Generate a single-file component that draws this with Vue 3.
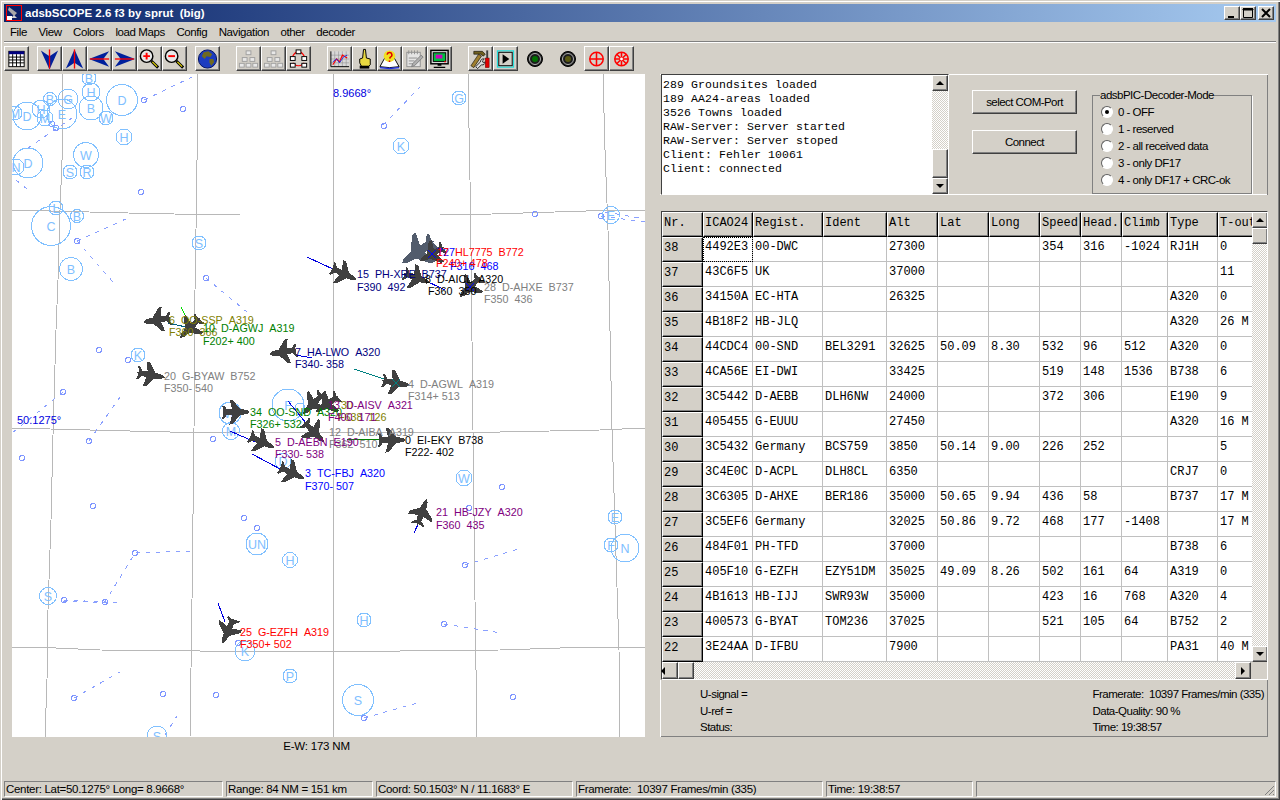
<template>
  <div class="window">
    <div class="title">
      <svg class="appicon" width="16" height="16" viewBox="0 0 16 16">
        <rect width="16" height="16" fill="#0a1f66" />
        <path d="M3 2l8 6-3 3-6-6z" fill="#a8a8a8" />
        <path d="M8 10l3 3H5z" fill="#d0d0d0" />
        <rect x="1" y="11" width="5" height="5" fill="#fff" />
        <rect x="0.5" y="0.5" width="15" height="15" fill="none" stroke="#f00" />
      </svg>
      <span class="caption">{{ caption }}</span>
      <div class="winbtns">
        <button class="winbtn"><svg width="14" height="12"><rect x="3" y="9" width="6" height="2" fill="#000" /></svg></button>
        <button class="winbtn"><svg width="14" height="12"><path d="M2.5 2.5h9v8h-9z M2 2h10v1H2z" fill="none" stroke="#000" /><rect x="2" y="1" width="10" height="2" fill="#000" /></svg></button>
        <button class="winbtn close"><svg width="14" height="12"><path d="M3 2l8 8M11 2l-8 8" stroke="#000" stroke-width="2" /></svg></button>
      </div>
    </div>

    <div class="menu">
      <span v-for="m in menu" :key="m">{{ m }}</span>
    </div>
    <div class="rule"></div>

    <div class="toolbar">
      <div class="tgroup">
        <button class="tool"><svg viewBox="0 0 24 24"><rect x="4" y="4" width="16" height="16" fill="#fff" stroke="#000" /><rect x="4" y="4" width="16" height="3" fill="#000080" /><path d="M4 10h16M4 13h16M4 16h16M8 7v13M12 7v13M16 7v13" stroke="#000" /></svg></button>
      </div>
      <div class="tgroup g8">
        <button class="tool"><svg viewBox="0 0 24 24"><path d="M3 3l9 6 9-6-9 20z" fill="#00209c" /><path d="M12 2v20" stroke="#f00" stroke-width="1.4" /></svg></button>
        <button class="tool"><svg viewBox="0 0 24 24"><path d="M3 22l9-6 9 6L12 2z" fill="#00209c" /><path d="M12 2v20" stroke="#f00" stroke-width="1.4" /></svg></button>
        <button class="tool"><svg viewBox="0 0 24 24"><path d="M22 4l-6 8 6 8L1 12z" fill="#00209c" /><path d="M2 12h20" stroke="#f00" stroke-width="1.4" /></svg></button>
        <button class="tool"><svg viewBox="0 0 24 24"><path d="M2 4l6 8-6 8 21-8z" fill="#00209c" /><path d="M2 12h20" stroke="#f00" stroke-width="1.4" /></svg></button>
        <button class="tool"><svg viewBox="0 0 24 24"><path d="M14 14l7 7" stroke="#000" stroke-width="3" /><path d="M15 15l5 5" stroke="#e8d800" stroke-width="1.2" /><circle cx="9" cy="9" r="6.5" fill="#e8e8e8" stroke="#000" stroke-width="1.5" /><path d="M5.5 9h7M9 5.5v7" stroke="#f00" stroke-width="2" /></svg></button>
        <button class="tool"><svg viewBox="0 0 24 24"><path d="M14 14l7 7" stroke="#000" stroke-width="3" /><path d="M15 15l5 5" stroke="#e8d800" stroke-width="1.2" /><circle cx="9" cy="9" r="6.5" fill="#e8e8e8" stroke="#000" stroke-width="1.5" /><path d="M5.5 9h7" stroke="#f00" stroke-width="2" /></svg></button>
      </div>
      <div class="tgroup g8">
        <button class="tool"><svg viewBox="0 0 24 24"><circle cx="12" cy="12" r="9.5" fill="#1c3cc0" stroke="#001060" /><path d="M8 5l5-1 4 3-2 3-4-1-2 3-3-3zM14 12l4 0 1 3-3 4-2-3z" fill="#706a20" /></svg></button>
      </div>
      <div class="tgroup g16">
        <button class="tool"><svg viewBox="0 0 24 24"><g fill="#e8e8e8" stroke="#a0a0a0"><rect x="9.5" y="3.5" width="5" height="4" /><rect x="5.5" y="10.5" width="5" height="4" /><rect x="13.5" y="10.5" width="5" height="4" /><rect x="2.5" y="16.5" width="5" height="4" /><rect x="9.5" y="16.5" width="5" height="4" /><rect x="16.5" y="16.5" width="5" height="4" /></g></svg></button>
        <button class="tool"><svg viewBox="0 0 24 24"><g fill="#e8e8e8" stroke="#a0a0a0"><rect x="9.5" y="3.5" width="5" height="4" /><rect x="5.5" y="10.5" width="5" height="4" /><rect x="13.5" y="10.5" width="5" height="4" /><rect x="2.5" y="16.5" width="5" height="4" /><rect x="9.5" y="16.5" width="5" height="4" /><rect x="16.5" y="16.5" width="5" height="4" /></g></svg></button>
        <button class="tool"><svg viewBox="0 0 24 24"><path d="M6 9Q12 -1 18 9M6 16Q12 22 18 16" fill="none" stroke="#f00" stroke-width="1.2" /><g fill="#fff" stroke="#000"><rect x="9.5" y="2.5" width="5" height="4" /><rect x="3.5" y="9.5" width="5" height="4" /><rect x="15.5" y="9.5" width="5" height="4" /><rect x="3.5" y="16.5" width="5" height="4" /><rect x="15.5" y="16.5" width="5" height="4" /></g></svg></button>
      </div>
      <div class="tgroup g16">
        <button class="tool"><svg viewBox="0 0 24 24"><rect x="3" y="4" width="19" height="16" fill="#d8d8d8" /><path d="M3 8h19M3 12h19M3 16h19M7 4v16M11 4v16M15 4v16M19 4v16" stroke="#909090" stroke-width=".6" /><path d="M3 4v16h19" fill="none" stroke="#000" /><path d="M5 18l4-6 3 3 3-7 5 3" fill="none" stroke="#f00" stroke-width="1.2" /><path d="M5 15l4-3 3 4 4-6 4-2" fill="none" stroke="#2030e0" /></svg></button>
        <button class="tool"><svg viewBox="0 0 24 24"><path d="M11 2h2l1 9 4 1v6l-2 2H9l-2-4v-4l3-1z" fill="#e8d840" stroke="#000" /><rect x="7" y="19" width="10" height="3" fill="#000" /></svg></button>
        <button class="tool"><svg viewBox="0 0 24 24"><path d="M2 20l5-9h10l5 9-10 1z" fill="#fff" stroke="#000" /><path d="M2 21l10 1 10-1" fill="none" stroke="#2030e0" stroke-width="1.5" /><circle cx="12" cy="9" r="6" fill="#f0e020" /><path d="M9.5 7.5a2.5 2.5 0 1 1 3.5 2.5l-1 1.5M12 13.5v1.5" fill="none" stroke="#e00000" stroke-width="1.6" /></svg></button>
        <button class="tool"><svg viewBox="0 0 24 24"><rect x="4" y="5" width="14" height="15" fill="#e4e4e4" stroke="#909090" /><path d="M6 3v4M9 3v4M12 3v4M15 3v4M6 11h9M6 14h6M6 17h6" stroke="#909090" /><path d="M10 17l9-9 2 2-9 9-3 1z" fill="#b0b0b0" stroke="#808080" /></svg></button>
        <button class="tool"><svg viewBox="0 0 24 24"><rect x="3" y="3" width="18" height="14" fill="#d8d8d8" stroke="#000" stroke-width="1.5" /><rect x="5.5" y="5.5" width="13" height="9" fill="#00c040" stroke="#000" /><rect x="8" y="7.5" width="7" height="4" fill="#d000c0" /><path d="M10 17h4v2h-4zM6 20h12v1.5H6z" fill="#000" /><rect x="17" y="14" width="1.5" height="1.5" fill="#f00" /></svg></button>
      </div>
      <div class="tgroup g16">
        <button class="tool"><svg viewBox="0 0 24 24"><path d="M5 4h9l3 3-2 2-3-2-7 0z" fill="#706020" stroke="#000" stroke-width=".6" /><path d="M10 7l3 2-8 12-3-2z" fill="#a08030" stroke="#000" stroke-width=".6" /><path d="M12 15a3 3 0 0 1 4-3l-2 2 1 2 2-1a3 3 0 0 1-4 3l-4 4-2-2z" fill="#e0e0e0" stroke="#000" stroke-width=".8" /><rect x="18" y="3" width="2" height="8" fill="#404040" /><rect x="17" y="11" width="4" height="10" fill="#e00000" stroke="#600000" stroke-width=".5" /></svg></button>
        <button class="tool"><svg viewBox="0 0 24 24"><rect x="3.5" y="3.5" width="17" height="17" fill="#d4d0c8" stroke="#00e0e0" /><rect x="5" y="5" width="14" height="14" fill="none" stroke="#000" /><path d="M9 7l7 5-7 5z" fill="#000" /></svg></button>
        <div class="led"><svg width="24" height="24" viewBox="0 0 24 24"><circle cx="12" cy="12" r="7.5" fill="#1c1c1c" stroke="#000" stroke-width="1" /><circle cx="12" cy="12" r="5.5" fill="none" stroke="#b0b0b0" /><circle cx="12" cy="12" r="3" fill="#007000" /></svg></div>
        <div class="led"><svg width="24" height="24" viewBox="0 0 24 24"><circle cx="12" cy="12" r="7.5" fill="#1c1c1c" stroke="#000" stroke-width="1" /><circle cx="12" cy="12" r="5.5" fill="none" stroke="#b0b0b0" /><circle cx="12" cy="12" r="3" fill="#585810" /></svg></div>
        <button class="tool"><svg viewBox="0 0 24 24"><circle cx="12" cy="12" r="7" fill="none" stroke="#f00" stroke-width="1.6" /><path d="M12 5v14M5 12h14" stroke="#f00" stroke-width="1.6" /></svg></button>
        <button class="tool"><svg viewBox="0 0 24 24"><circle cx="12" cy="12" r="7" fill="none" stroke="#f00" stroke-width="1.6" /><path d="M12 5v14M5 12h14M7 7l10 10M17 7L7 17" stroke="#f00" stroke-width="1.6" /><circle cx="12" cy="12" r="1.5" fill="#fff" /></svg></button>
      </div>
    </div>

    <div class="main">
      <div class="left">
        <svg class="map" width="633" height="663" viewBox="12 74 633 663" shape-rendering="crispEdges">
          <defs>
            <path id="plane" d="M0-14 2-11 3-4 12 3 12.5 6.5 3 4 2.5 9 6.5 12 6.5 14 1 12.5 0 14-1 12.5-6.5 14-6.5 12-2.5 9-3 4-12.5 6.5-12 3-3-4-2-11Z" />
          </defs>
          <polyline v-for="(g, i) in gridLines" :key="'g' + i" :points="g" class="gridline" />
          <polyline v-for="(d, i) in navLines" :key="'n' + i" :points="d" class="navline" />
          <circle v-for="(n, i) in navDots" :key="'d' + i" :cx="n[0]" :cy="n[1]" r="2.5" class="navdot" />
          <g v-for="(c, i) in beacons" :key="'b' + i">
            <circle :cx="c[1]" :cy="c[2]" :r="c[3]" class="beacon" />
            <text :x="c[1]" :y="c[2] + 4.5" text-anchor="middle" class="beacon-label">{{ c[0] }}</text>
          </g>
          <text x="333" y="97" class="coord">8.9668°</text>
          <text x="17" y="424" class="coord">50.1275°</text>
          <line v-for="(t, i) in trails" :key="'t' + i" :x1="t[0]" :y1="t[1]" :x2="t[2]" :y2="t[3]" :stroke="t[4]" />
          <use v-for="(p, i) in planes" :key="'p' + i" href="#plane" :fill="p[3] || '#404040'" :transform="`translate(${p[0]} ${p[1]}) rotate(${p[2]}) scale(${p[4] || 1})`" />
          <path d="M428 250l8 8M436 250l-8 8M466 283l8 8M474 283l-8 8" stroke="#0000ff" />
          <path d="M392 379l8 8M400 379l-8 8" stroke="#008080" />
          <g v-for="(l, i) in labels" :key="'l' + i" :fill="l[3]" class="plane-label">
            <text :x="l[0]" :y="l[1]">{{ nb(l[2]) }}</text>
            <text :x="l[0] + (l[6] || 0)" :y="l[1] + (l[5] || 12)">{{ nb(l[4]) }}</text>
          </g>
        </svg>
        <div class="scale">E-W: 173 NM</div>
      </div>

      <div class="right">
        <div class="top">
          <div class="memo">
            <div class="memo-text">
              <div v-for="m in log" :key="m">{{ m }}</div>
            </div>
            <div class="vscroll">
              <button class="sbtn"><i class="arr up"></i></button>
              <div class="track"></div>
              <div class="thumb memo-thumb"></div>
              <button class="sbtn"><i class="arr down"></i></button>
            </div>
          </div>
          <div class="actions">
            <button class="action">select COM-Port</button>
            <button class="action">Connect</button>
          </div>
          <fieldset class="mode">
            <legend>adsbPIC-Decoder-Mode</legend>
            <label v-for="(r, i) in modes" :key="r" class="radio">
              <span class="dot" :class="{ on: i === 0 }"></span>{{ r }}
            </label>
          </fieldset>
        </div>

        <div class="gridbox">
          <div class="gridrow">
            <div class="table">
              <div class="tr">
                <div v-for="h in headers" :key="h" class="th">{{ h }}</div>
              </div>
              <div v-for="row in rows" :key="row[0]" class="tr">
                <div class="th">{{ row[0] }}</div>
                <div v-for="(c, i) in row.slice(1)" :key="i" class="td" :class="{ focus: i === 0 && row[0] === '38' }">{{ c }}</div>
              </div>
            </div>
            <div class="vscroll gridv">
              <button class="sbtn"><i class="arr up"></i></button>
              <div class="thumb"></div>
              <div class="track"></div>
              <button class="sbtn"><i class="arr down"></i></button>
            </div>
          </div>
          <div class="hscroll">
            <button class="sbtn"><i class="arr left"></i></button>
            <div class="thumb wide"></div>
            <div class="track"></div>
            <button class="sbtn"><i class="arr right"></i></button>
          </div>
        </div>

        <div class="info">
          <div class="info-col">
            <div>U-signal =</div>
            <div>U-ref =</div>
            <div>Status:</div>
          </div>
          <div class="info-col">
            <div>{{ framerate }}</div>
            <div>Data-Quality: 90 %</div>
            <div>Time: 19:38:57</div>
          </div>
        </div>
      </div>
    </div>

    <div class="status">
      <div class="cell s219">Center: Lat=50.1275° Long= 8.9668°</div>
      <div class="cell s147">Range: 84 NM = 151 km</div>
      <div class="cell s197">Coord: 50.1503° N / 11.1683° E</div>
      <div class="cell s247">{{ framerate }}</div>
      <div class="cell s147">Time: 19:38:57</div>
      <div class="cell last">
        <svg class="grip" width="12" height="12"><path d="M11 2L2 11M11 6L6 11M11 10L10 11" stroke="#808080" /></svg>
      </div>
    </div>
  </div>
</template>

<script setup>
const caption = 'adsbSCOPE 2.6 f3 by sprut  (big)'
const framerate = 'Framerate:  10397 Frames/min (335)'

const menu = ['File', 'View', 'Colors', 'load Maps', 'Config', 'Navigation', 'other', 'decoder']

const log = [
  '289 Groundsites loaded',
  '189 AA24-areas loaded',
  '3526 Towns loaded',
  'RAW-Server: Server started',
  'RAW-Server: Server stoped',
  'Client: Fehler 10061',
  'Client: connected'
]

const modes = ['0 - OFF', '1 - reserved', '2 - all received data', '3 - only DF17', '4 - only DF17 + CRC-ok']

const headers = ['Nr.', 'ICAO24', 'Regist.', 'Ident', 'Alt', 'Lat', 'Long', 'Speed', 'Head.', 'Climb', 'Type', 'T-out']

const rows = [
  ['38', '4492E3', '00-DWC', '', '27300', '', '', '354', '316', '-1024', 'RJ1H', '0'],
  ['37', '43C6F5', 'UK', '', '37000', '', '', '', '', '', '', '11'],
  ['36', '34150A', 'EC-HTA', '', '26325', '', '', '', '', '', 'A320', '0'],
  ['35', '4B18F2', 'HB-JLQ', '', '', '', '', '', '', '', 'A320', '26 M'],
  ['34', '44CDC4', '00-SND', 'BEL3291', '32625', '50.09', '8.30', '532', '96', '512', 'A320', '0'],
  ['33', '4CA56E', 'EI-DWI', '', '33425', '', '', '519', '148', '1536', 'B738', '6'],
  ['32', '3C5442', 'D-AEBB', 'DLH6NW', '24000', '', '', '372', '306', '', 'E190', '9'],
  ['31', '405455', 'G-EUUU', '', '27450', '', '', '', '', '', 'A320', '16 M'],
  ['30', '3C5432', 'Germany', 'BCS759', '3850', '50.14', '9.00', '226', '252', '', '', '5'],
  ['29', '3C4E0C', 'D-ACPL', 'DLH8CL', '6350', '', '', '', '', '', 'CRJ7', '0'],
  ['28', '3C6305', 'D-AHXE', 'BER186', '35000', '50.65', '9.94', '436', '58', '', 'B737', '17 M'],
  ['27', '3C5EF6', 'Germany', '', '32025', '50.86', '9.72', '468', '177', '-1408', '', '17 M'],
  ['26', '484F01', 'PH-TFD', '', '37000', '', '', '', '', '', 'B738', '6'],
  ['25', '405F10', 'G-EZFH', 'EZY51DM', '35025', '49.09', '8.26', '502', '161', '64', 'A319', '0'],
  ['24', '4B1613', 'HB-IJJ', 'SWR93W', '35000', '', '', '423', '16', '768', 'A320', '4'],
  ['23', '400573', 'G-BYAT', 'TOM236', '37025', '', '', '521', '105', '64', 'B752', '2'],
  ['22', '3E24AA', 'D-IFBU', '', '7900', '', '', '', '', '', 'PA31', '40 M']
]

// svg text drops double spaces otherwise
const nb = (s) => s.replace(/ /g, '\u00a0')

// map geometry below is in window pixels, the svg viewBox starts at the map corner
const gridLines = [
  '62,74 62,160 60,210 58,280 56,330 53,435 51,520 48,610 47,680 45,737',
  '197,74 197,160 196,230 195,290 194,430 192,600 190,737',
  '333,74 333,737',
  '468,74 470,180 471,250 473,430 475,600 477,737',
  '603,74 605,150 608,230 612,430 619,650 620,737',
  '12,210 128,213 174,214 240,215 440,215 492,214 586,211 645,210',
  '12,428 50,429 170,432 500,432 600,430 645,428',
  '12,647 34,647 100,650 200,651 400,651 500,650 560,648 645,647'
]

const navLines = [
  '144,100 192,77',
  '28,148 72,118',
  '16,180 32,193',
  '77,241 128,218',
  '77,241 113,282',
  '206,278 247,312',
  '63,392 12,433',
  '89,441 120,397',
  '64,600 105,602 135,553 192,551',
  '63,601 120,603',
  '444,624 501,633',
  '74,698 120,672',
  '364,718 421,702',
  '165,735 177,716',
  '383,125 420,87',
  '601,216 645,222',
  '465,565 522,548',
  '605,212 640,218'
]

const navDots = [
  [144, 100], [183, 109], [52, 124], [56, 128], [141, 192], [77, 241], [206, 278], [99, 350], [128, 360], [63, 392],
  [89, 441], [22, 458], [93, 506], [64, 600], [105, 602], [135, 553], [444, 624], [74, 698], [163, 694], [216, 695],
  [364, 718], [513, 697], [384, 126], [535, 214], [601, 216], [244, 518], [257, 528], [213, 439], [502, 487], [469, 508],
  [238, 643], [465, 565]
]

const beacons = [
  ['B', 89, 78, 7], ['H', 91, 92, 9], ['B', 91, 108, 12], ['D', 122, 100, 15.5], ['G', 68, 99, 10], ['B', 50, 99, 6.5],
  ['H', 41, 109, 9], ['E', 62, 114, 15], ['M', 15, 113, 7], ['D', 27, 116, 14], ['M', 45, 118, 8], ['W', 106, 118, 7],
  ['H', 124, 137, 8], ['W', 86, 155, 12.5], ['S', 70, 172, 7], ['R', 87, 172, 7], ['D', 28, 163, 15], ['N', 16, 167, 8],
  ['L', 56, 208, 7], ['C', 51, 226, 19.5], ['B', 77, 216, 6.5], ['B', 71, 269, 11.5], ['S', 199, 243, 7], ['K', 138, 355, 7],
  ['G', 459, 98, 7], ['K', 401, 146, 8], ['E', 611, 215, 8.5], ['F', 288, 405, 16], ['', 300, 408, 5], ['W', 230, 413, 11],
  ['M', 231, 431, 8.5], ['D', 283, 461, 8], ['W', 464, 478, 8], ['H', 290, 560, 7.5], ['UN', 257, 544, 11], ['S', 48, 596, 8.5],
  ['E', 615, 517, 7], ['F', 611, 545, 7], ['N', 625, 548, 14], ['H', 364, 620, 7], ['K', 245, 651, 10], ['P', 290, 676, 7],
  ['S', 358, 700, 15.5], ['S', 157, 736, 10]
]

const trails = [
  [307, 257, 335, 270, '#0000e0'],
  [181, 307, 190, 325, '#00e000'],
  [168, 323, 186, 327, '#006080'],
  [296, 355, 312, 358, '#0000e0'],
  [354, 369, 390, 381, '#008080'],
  [288, 401, 310, 428, '#0000e0'],
  [230, 431, 255, 442, '#0000e0'],
  [347, 439, 380, 439, '#008000'],
  [252, 454, 282, 470, '#0000e0'],
  [414, 533, 420, 520, '#0000e0'],
  [218, 603, 225, 622, '#0000e0'],
  [430, 240, 432, 250, '#0000e0'],
  [424, 280, 445, 290, '#0000e0']
]

// x, y, heading, colour, scale
const planes = [
  [418, 252, 235, '#525c6c', 1.4],
  [432, 254, 240],
  [344, 274, 115],
  [417, 278, 110],
  [470, 287, 225],
  [157, 320, 262],
  [190, 328, 225],
  [283, 352, 262],
  [151, 375, 100],
  [396, 383, 100],
  [236, 412, 90],
  [313, 404, 225],
  [327, 404, 235],
  [314, 432, 135],
  [262, 442, 115],
  [392, 440, 90],
  [292, 473, 115],
  [422, 512, 20],
  [228, 631, 205]
]

// x, first baseline, line 1, colour, line 2, line gap, line 2 x offset
const labels = [
  [437, 256, '727', '#0000ff', 'F316  468', 14, 13],
  [437, 256, '17  HL7775  B772', '#ff0000', 'F240+ 478', 11, -1],
  [357, 278, '15  PH-XRE  B737', '#000080', 'F390  492', 13],
  [425, 283, '8  D-AICL  A320', '#000000', 'F360  350', 12, 3],
  [484, 291, '28  D-AHXE  B737', '#808080', 'F350  436', 12],
  [169, 324, '6  OO-SSP  A319', '#808000', 'F360  366', 12],
  [203, 332, '10  D-AGWJ  A319', '#008000', 'F202+ 400', 13],
  [295, 356, '7  HA-LWO  A320', '#000080', 'F340- 358', 12],
  [164, 380, '20  G-BYAW  B752', '#808080', 'F350- 540', 12],
  [408, 388, '4  D-AGWL  A319', '#808080', 'F314+ 513', 12],
  [250, 416, '34  OO-SND  A320', '#008000', 'F326+ 532', 12],
  [341, 409, '30', '#808000', 'F638  126', 12, -3],
  [328, 409, '13  D-AISV  A321', '#800080', 'F400  171', 12],
  [329, 436, '12  D-AIBA  A319', '#808080', 'F362  510', 12],
  [275, 446, '5  D-AEBN  E190', '#800080', 'F330- 538', 12],
  [405, 444, '0  EI-EKY  B738', '#000000', 'F222- 402', 12],
  [305, 477, '3  TC-FBJ  A320', '#0000ff', 'F370- 507', 13],
  [436, 516, '21  HB-JZY  A320', '#800080', 'F360  435', 13],
  [240, 636, '25  G-EZFH  A319', '#ff0000', 'F350+ 502', 12]
]
</script>

<style>
html, body { margin: 0; background: #d4d0c8; }
</style>

<style scoped>
.window {
  width: 1280px;
  height: 800px;
  box-sizing: border-box;
  padding: 4px 4px 3px;
  background: #d4d0c8;
  box-shadow: inset 1px 1px #d4d0c8, inset 2px 2px #fff, inset -1px -1px #404040, inset -2px -2px #808080;
  display: flex;
  flex-direction: column;
  font-family: "Liberation Sans", Arial, sans-serif;
  font-size: 11px;
  color: #000;
  overflow: hidden;
}

button {
  padding: 0;
  margin: 0;
  font: inherit;
  color: inherit;
  background: #d4d0c8;
  border: 1px solid;
  border-color: #fff #404040 #404040 #fff;
  box-shadow: inset -1px -1px #808080;
  box-sizing: border-box;
}

.title {
  height: 18px;
  display: flex;
  align-items: center;
  background: linear-gradient(90deg, #0a246a, #a6caf0);
  color: #fff;
  flex: none;
}
.appicon { margin: 0 3px 0 2px; flex: none; }
.caption {
  font-weight: bold;
  font-size: 11.5px;
  white-space: pre;
}
.winbtns { margin-left: auto; display: flex; margin-right: 2px; }
.winbtn { width: 16px; height: 14px; display: flex; align-items: center; justify-content: center; }
.winbtn svg { display: block; }
.close { margin-left: 2px; }

.menu {
  height: 19px;
  display: flex;
  align-items: center;
  padding-left: 6px;
  gap: 11.5px;
  flex: none;
  font-size: 11.5px;
  letter-spacing: -0.4px;
}

.rule {
  flex: none;
  height: 1px;
  background: #808080;
  border-bottom: 1px solid #fff;
}

.toolbar {
  height: 25px;
  margin: 3px 0;
  flex: none;
  display: flex;
}
.tgroup { display: flex; }
.g8 { margin-left: 8px; }
.g16 { margin-left: 16px; }
.tool { width: 25px; height: 25px; display: flex; align-items: center; justify-content: center; }
.tool svg { width: 24px; height: 24px; display: block; }
.led { width: 33px; height: 25px; display: flex; align-items: center; justify-content: center; }

.main {
  flex: none;
  display: flex;
  padding-left: 8px;
  height: 663px;
}
.left { width: 633px; margin-right: 15px; flex: none; }
.map { display: block; background: #fff; }
.gridline { fill: none; stroke: #b8b8b8; }
.navline { fill: none; stroke: #8aa0ff; stroke-dasharray: 4 6; }
.navdot { fill: none; stroke: #7f96ff; }
.beacon { fill: none; stroke: #80c0ff; }
.beacon-label { fill: #80c0ff; font-size: 12.5px; font-family: "Liberation Sans", Arial, sans-serif; }
.coord { fill: #0000e0; font-size: 11px; font-family: "Liberation Sans", Arial, sans-serif; }
.plane-label { font-size: 10.75px; font-family: "Liberation Sans", Arial, sans-serif; }
.scale { text-align: center; padding-right: 24px; margin-top: 3px; font-size: 11.5px; letter-spacing: -0.2px; }

.right { width: 608px; flex: none; display: flex; flex-direction: column; }
.top {
  height: 121px;
  box-sizing: border-box;
  display: flex;
  box-shadow: inset 0 1px #fff, inset -1px 0 #808080, inset 0 -1px #fff;
  flex: none;
}
.memo {
  width: 288px;
  margin-left: 1px;
  box-sizing: border-box;
  background: #fff;
  display: flex;
  border: 1px solid;
  border-color: #404040 #fff #fff #404040;
  flex: none;
}
.memo-text {
  flex: 1;
  padding: 3px 0 0 1px;
  font: 11.5px/14px "Liberation Mono", "Courier New", monospace;
  white-space: pre;
  letter-spacing: 0.1px;
}
.vscroll {
  width: 16px;
  flex: none;
  display: flex;
  flex-direction: column;
}
.track {
  flex: 1;
  background: repeating-conic-gradient(#d4d0c8 0 25%, #fff 0 50%) 0 0 / 2px 2px;
}
.thumb {
  flex: none;
  height: 16px;
  background: #d4d0c8;
  box-sizing: border-box;
  border: 1px solid;
  border-color: #fff #404040 #404040 #fff;
  box-shadow: inset -1px -1px #808080;
}
.memo-thumb { height: 29px; }
.sbtn { width: 16px; height: 16px; flex: none; display: flex; align-items: center; justify-content: center; }
.arr { display: block; width: 0; height: 0; border: 4px solid transparent; }
.arr.up { border-bottom-color: #000; border-top-width: 0; }
.arr.down { border-top-color: #000; border-bottom-width: 0; }
.arr.left { border-right-color: #000; border-left-width: 0; }
.arr.right { border-left-color: #000; border-right-width: 0; }

.actions {
  width: 105px;
  margin-left: 23px;
  padding-top: 16px;
  display: flex;
  flex-direction: column;
  gap: 16px;
  flex: none;
}
.action { height: 24px; font-size: 11.5px; letter-spacing: -0.55px; }

.mode {
  width: 160px;
  height: 105px;
  margin: 15px 0 0 15px;
  padding: 0;
  box-sizing: border-box;
  border: 1px solid #808080;
  box-shadow: 1px 1px #fff;
  flex: none;
  font-size: 11.5px;
  letter-spacing: -0.5px;
}
.mode legend { padding: 0; margin-left: 7px; line-height: 12px; }
.radio { display: flex; align-items: center; height: 17px; padding-left: 8px; white-space: pre; }
.radio:first-of-type { margin-top: 2px; }
.dot {
  width: 12px;
  height: 12px;
  box-sizing: border-box;
  margin-right: 5px;
  border-radius: 50%;
  background: #fff;
  border: 1px solid;
  border-color: #606060 #fff #fff #606060;
  display: flex;
  align-items: center;
  justify-content: center;
}
.dot.on::after { content: ""; width: 4px; height: 4px; border-radius: 50%; background: #000; }

.gridbox {
  margin-top: 16px;
  height: 469px;
  flex: none;
  box-sizing: border-box;
  border: 1px solid;
  border-color: #404040 #fff #fff #404040;
  margin-left: 1px;
  display: flex;
  flex-direction: column;
}
.gridrow { display: flex; height: 450px; flex: none; overflow: hidden; }
.table {
  width: 590px;
  flex: none;
  overflow: hidden;
  background: #fff;
  font: 12px "Liberation Mono", "Courier New", monospace;
}
.tr {
  display: grid;
  grid-template-columns: 41px 50px 70px 64px 51px 51px 51px 41px 41px 46px 50px 51px;
  height: 25px;
}
.th {
  background: #d4d0c8;
  box-sizing: border-box;
  border: 1px solid;
  border-color: #fff #000 #000 #fff;
  padding-left: 1px;
  line-height: 20px;
  box-shadow: inset -1px -1px #808080;
  white-space: nowrap;
  overflow: hidden;
}
.td {
  box-sizing: border-box;
  border-right: 1px solid #c0c0c0;
  border-bottom: 1px solid #c0c0c0;
  padding-left: 2px;
  line-height: 21px;
  white-space: pre;
  overflow: hidden;
}
.td.focus { outline: 1px dotted #000; outline-offset: -1px; }
.gridv { height: 450px; }
.hscroll { display: flex; height: 17px; flex: none; padding-right: 16px; }
.hscroll .sbtn, .hscroll .thumb { height: 17px; }
.thumb.wide { width: 16px; }
.hscroll .track { flex: 1; }

.info {
  height: 57px;
  flex: none;
  box-sizing: border-box;
  display: flex;
  justify-content: space-between;
  padding: 6px 4px 0 40px;
  box-shadow: inset 1px 0 #fff, inset -1px 0 #808080, inset 0 -1px #808080;
  font-size: 11.5px;
  line-height: 16.5px;
  letter-spacing: -0.5px;
  white-space: pre;
}

.status {
  margin-top: auto;
  height: 16px;
  display: flex;
  gap: 3px;
  flex: none;
  font-size: 11.5px;
  letter-spacing: -0.3px;
}
.s219 { width: 219px; }
.s147 { width: 147px; }
.s197 { width: 197px; }
.s247 { width: 247px; }
.cell {
  box-sizing: border-box;
  border: 1px solid;
  border-color: #808080 #fff #fff #808080;
  padding-left: 1px;
  line-height: 14px;
  white-space: pre;
  overflow: hidden;
}
.cell.last { flex: 1; position: relative; }
.grip { position: absolute; right: 0; bottom: 0; }
</style>
